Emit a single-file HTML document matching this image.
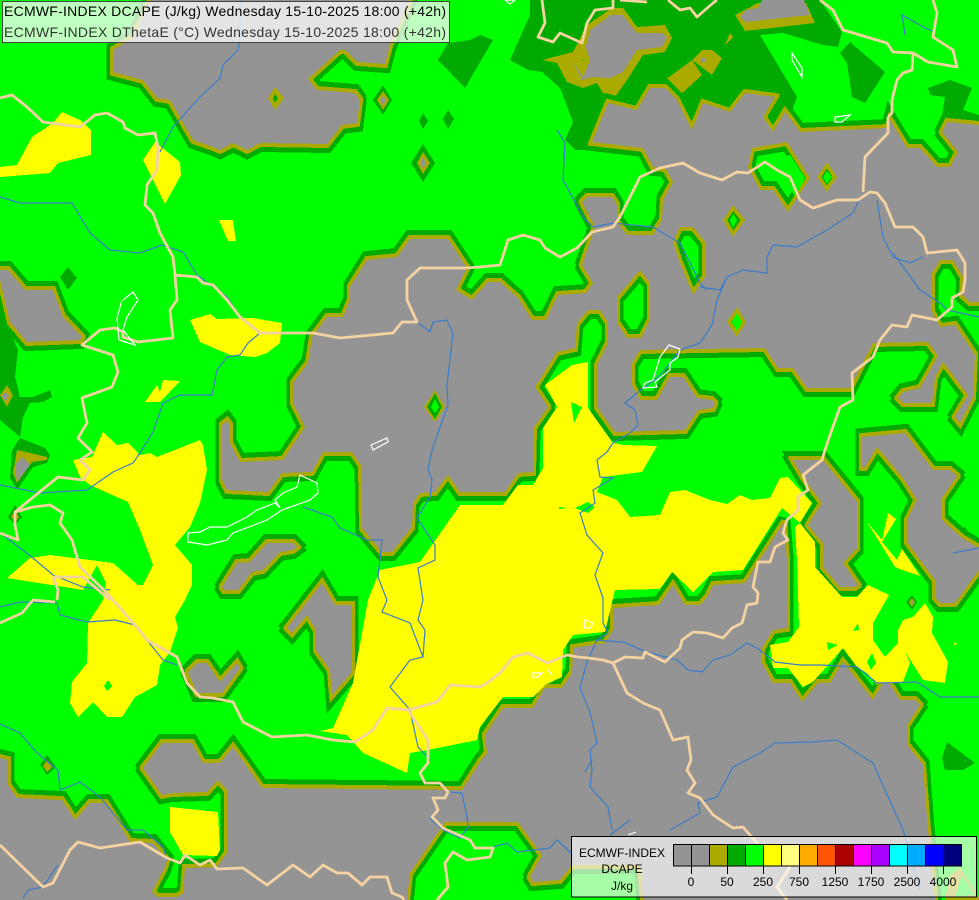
<!DOCTYPE html>
<html><head><meta charset="utf-8"><title>ECMWF-INDEX DCAPE</title>
<style>
html,body{margin:0;padding:0;background:#0f0}
svg{display:block;position:absolute;left:0;top:0}
text{font-family:"Liberation Sans",sans-serif}
.b{fill:none;stroke:#f5d2a2;stroke-width:2.8;stroke-linejoin:round}
.r{fill:none;stroke:#3b7cc8;stroke-width:1.2}
.w{fill:none;stroke:#fff;stroke-width:1.2}
</style></head><body>
<svg width="979" height="900" viewBox="0 0 979 900" xmlns="http://www.w3.org/2000/svg">
<defs>
<path id="g" fill-rule="evenodd" d="
M592,142 643,148 653,167 665,168 673,182 663,200 662,220 653,235 627,235 617,222 617,205 612,197 587,197 582,202 595,227 582,265 593,283 586,293 558,295 546,320 532,320 518,298 500,282 488,282 472,300 456,290 467,268 448,239 410,239 397,257 367,260 350,287 350,300 343,317 327,317 312,337 308,363 293,383 293,403 305,427 283,460 240,462 230,443 230,425 227,421 222,425 222,480 227,490 268,492 282,473 312,472 323,452 352,452 361,465 362,528 382,552 392,552 412,527 413,503 420,493 435,492 448,475 460,492 505,492 518,473 533,472 534,427 548,407 535,387 557,352 575,348 577,323 588,310 600,310 608,322 608,343 597,365 597,407 615,432 685,430 698,410 713,408 715,403 712,400 697,398 683,377 670,377 657,400 640,400 632,385 632,363 640,350 765,348 778,368 793,368 807,388 850,388 873,343 928,342 938,356 920,388 903,392 898,398 903,403 932,403 935,377 943,362 968,395 955,417 960,423 973,397 975,355 955,325 940,327 932,312 932,273 940,260 953,260 963,277 962,295 970,302 979,302 979,125 947,122 942,132 958,152 950,167 937,167 920,148 907,148 890,120 888,128 800,132 785,112 773,132 763,117 775,97 745,93 730,112 703,103 692,130 677,100 665,88 650,88 637,110 608,103Z
M733,205 745,220 733,237 723,220Z
M752,148 787,142 810,178 788,212 773,190 760,190 748,167Z
M827,162 837,177 827,192 817,177Z
M673,242 680,227 693,227 705,242 705,277 693,295 680,263Z
M640,270 650,283 650,320 641,338 627,338 617,323 617,297Z
M737,307 746,322 737,337 727,322Z
M150,0 133,38 113,50 113,72 143,80 157,98 170,100 193,140 213,147 220,150 233,143 247,150 260,143 327,144 342,125 357,123 360,100 355,93 317,90 308,79 340,50 345,50 357,62 385,64 390,45 410,0Z
M0,270 8,270 25,290 53,290 63,317 82,337 80,340 27,342 10,322 0,280Z
M222,587 237,563 250,562 267,543 293,543 297,547 293,550 280,552 263,570 252,572 238,590 224,590Z
M322,583 332,600 335,605 352,605 352,672 332,695 330,670 316,650 316,630 307,615 292,633 287,628Z
M188,672 197,663 207,663 220,682 237,663 240,668 222,693 197,693Z
M862,437 905,433 933,470 950,470 957,476 942,498 942,520 962,538 979,548 979,570 955,603 940,603 935,597 935,580 907,542 907,520 917,500 903,478 877,447 865,467 862,467Z
M793,460 823,460 857,502 857,548 843,563 858,585 855,587 840,587 823,567 823,543 808,525 822,503 803,477Z
M407,900 0,900 0,758 8,760 8,785 17,798 62,800 75,820 90,803 106,803 130,842 153,843 167,860 165,867 152,892 158,897 177,897 183,893 185,868 217,867 227,853 227,790 218,780 207,792 172,793 162,795 143,768 162,743 192,743 203,763 220,763 233,747 262,788 462,790 480,762 487,753 485,735 503,708 533,708 545,688 562,688 572,673 573,648 605,643 613,630 613,608 659,605 673,585 685,605 700,605 707,597 713,585 745,583 784,522 787,560 787,628 773,630 762,648 762,663 773,683 790,683 802,702 818,683 830,683 843,662 873,700 886,678 900,700 915,700 920,705 907,725 907,745 923,765 928,830 935,900 643,900 640,865 572,865 560,880 533,882 530,877 542,855 518,822 445,822 410,873Z"/>
</defs>
<rect width="979" height="900" fill="#00ff00"/>
<g shape-rendering="crispEdges">
<!-- dark green regions -->
<g fill="#00aa00">
<polygon points="530,0 530,15 510,60 528,70 542,72 560,88 573,122 565,140 575,150 610,150 640,125 793,125 793,108 797,97 760,35 783,33 823,45 838,47 842,32 820,0"/>
<polygon points="840,53 850,42 885,72 865,103 852,97 847,63"/>
<polygon points="928,88 950,80 972,88 963,110 979,115 979,125 940,125 942,115 945,97 930,95"/>
<polygon points="448,43 438,60 465,88 493,40 480,35 470,40"/>
<polygon points="0,280 5,320 18,350 15,377 20,397 33,397 50,390 52,397 43,402 30,403 23,417 20,437 0,420"/>
<polygon points="68,267 77,278 68,290 60,277"/>
<polygon points="20,438 45,448 50,455 47,463 33,467 17,490 10,478 12,450"/>
<polygon points="383,85 392,100 383,115 373,100"/>
<polygon points="423,113 428,121 423,129 419,121"/>
<polygon points="448,110 454,119 448,129 443,119"/>
<polygon points="423,144 435,163 423,182 411,163"/>
<polygon points="15,505 22,517 15,525 8,517"/>
<polygon points="47,755 56,767 47,775 40,765"/>
<polygon points="947,742 975,763 963,770 945,770 942,758"/>
<polygon points="960,530 965,527 973,540 979,540 979,548 966,547"/>
</g>
<!-- olive regions -->
<g fill="#aaaa00">
<polygon points="612,8 623,8 637,27 665,25 672,38 665,52 643,55 627,80 613,100 607,100 597,83 583,88 567,82 557,63 542,60 573,52 587,25"/>
<polygon points="665,80 692,60 702,75 678,97"/>
<polygon points="702,50 712,50 722,58 712,75 692,60"/>
<polygon points="725,45 730,33 733,37"/>
<polygon points="735,15 758,3 780,3 806,3 815,23 745,31"/>
<polygon points="7,385 13,395 7,407 0,395"/>
<polygon points="17,450 47,457 47,460 32,462 17,483 13,473"/>
<polygon points="383,91 389,100 383,110 377,100"/>
<polygon points="423,152 430,163 423,174 417,163"/>
<polygon points="15,510 19,517 15,522 11,517"/>
<polygon points="47,760 52,767 47,772 43,766"/>
<polygon points="223,5 235,17 223,30 212,17"/>
</g>
<!-- grey with bands -->
<use href="#g" fill="none" stroke="#00aa00" stroke-width="13" stroke-linejoin="miter" stroke-miterlimit="3" transform="translate(0,-2.5)"/>
<use href="#g" fill="none" stroke="#00aa00" stroke-width="13" stroke-linejoin="miter" stroke-miterlimit="3" transform="translate(0,2.5)"/>
<use href="#g" fill="none" stroke="#aaaa00" stroke-width="6" stroke-linejoin="miter" stroke-miterlimit="3" transform="translate(0,-1)"/>
<use href="#g" fill="none" stroke="#aaaa00" stroke-width="6" stroke-linejoin="miter" stroke-miterlimit="3" transform="translate(0,1)"/>
<use href="#g" fill="#949494"/>
<!-- grey without strokes -->
<g fill="#949494">
<polygon points="611,15 623,15 637,33 662,33 667,38 662,47 637,50 623,72 610,78 593,77 582,80 572,60 587,43 590,30"/>
<polygon points="740,17 746,10 758,8 762,0 804,0 810,15 745,22"/>
<polygon points="0,280 0,270 8,270 0,272"/>
<polygon points="22,457 30,465 17,482 15,465"/>
<polygon points="5,392 9,396 5,402 2,396"/>
<polygon points="383,96 386,100 383,106 380,100"/>
<polygon points="423,157 426,163 423,169 420,163"/>
<polygon points="703,57 707,60 703,63 700,60"/>
</g>
<!-- items over grey -->
<polygon fill="#aaaa00" points="572,60 585,45 590,60 583,77"/>
<polygon fill="#00aa00" points="582,59 583,59 583,61"/>
<polygon fill="#aaaa00" points="275,87 284,98 275,110 268,98"/>
<polygon fill="#00aa00" points="275,94 278,98 275,103 273,98"/>
<polygon fill="#aaaa00" points="435,390 445,407 435,422 424,407"/>
<polygon fill="#00aa00" points="435,393 442,407 435,419 427,407"/>
<polygon fill="#00ff00" points="435,399 439,407 435,413 431,407"/>
<g fill="#00ff00">
<polygon points="777,158 790,155 805,178 795,197 787,182 763,177 763,167"/>
<polygon points="733,214 737,220 733,228 730,220"/>
<polygon points="827,171 832,177 827,184 823,177"/>
<polygon points="737,313 742,322 737,331 732,322"/>
</g>
<polygon fill="#00aa00" points="731,96 733,96 731,100"/>
<!-- yellow -->
<g fill="#ffff00">
<polygon points="0,167 17,165 32,137 53,123 62,112 80,120 91,130 91,155 58,163 50,173 0,177"/>
<polygon points="155,142 180,162 181,175 165,204 143,160"/>
<polygon points="219,220 233,220 236,241 228,241"/>
<polygon points="190,320 210,314 217,319 253,318 282,323 280,343 267,353 255,357 230,355 200,342"/>
<polygon points="145,402 157,385 160,392 163,380 180,381 160,402"/>
<polygon points="73,460 92,457 103,432 117,445 128,443 140,455 150,453 157,457 200,440 203,445 207,470 200,503 190,527 175,545 192,565 192,585 185,600 175,617 178,628 170,652 160,665 157,685 135,697 122,717 107,717 93,702 78,717 70,703 72,682 87,663 88,623 103,600 106,583 97,565 83,590 7,578 30,558 50,555 113,563 138,585 143,585 153,565 140,530 128,502 90,485 80,477"/>
<polygon points="588,362 572,365 545,385 557,407 543,428 543,468 533,485 518,485 503,505 460,505 420,562 380,570 368,600 353,683 333,728 320,731 347,735 363,753 407,773 410,753 428,750 477,740 480,727 503,697 533,697 545,685 562,677 563,650 573,635 605,632 615,590 660,589 672,572 693,592 713,572 743,570 782,508 800,523 812,503 788,477 780,478 770,498 752,500 740,495 727,504 710,500 685,490 670,492 660,515 630,517 617,500 597,492 603,477 642,472 657,446 623,445 613,443 588,408"/>
<polygon points="800,523 815,542 815,567 842,597 857,597 868,585 889,595 873,623 873,640 885,657 898,643 898,630 903,620 913,617 925,603 933,617 932,633 948,662 945,683 923,680 905,652 910,663 903,682 878,683 887,667 877,685 867,673 857,667 843,648 813,682 803,687 788,668 773,668 770,645 788,642 799,627 797,560 795,527"/>
<polygon points="867,522 882,540 888,513 896,519 882,542 897,560 902,549 920,576 902,570 895,567"/>
<polygon points="170,807 218,812 220,850 217,856 183,855 170,832"/>
<polygon points="955,641 957,644 954,645"/>
</g>
<!-- green in yellow -->
<g fill="#00ff00">
<polygon points="827,642 838,645 828,650"/>
<polygon points="872,653 876,663 871,670 867,662"/>
<polygon points="858,623 859,630 853,631"/>
<polygon points="571,402 582,407 574,423"/>
<polygon points="575,508 588,502 595,507 588,513"/>
<polygon points="559,507 568,508 559,509"/>
<polygon points="108,680 112,686 107,691 104,686"/>
</g>
<polygon fill="#00aa00" points="912,595 917,602 912,610 906,602"/>
<polygon fill="#aaaa00" points="912,598 915,602 912,607 909,602"/>
<polygon fill="#949494" points="912,600 913,602 912,604 911,602"/>
<!-- bottom right patch -->
<polygon fill="#aaaa00" points="960,868 979,897 979,900 945,900 950,875"/>
<polygon fill="#00ff00" points="962,875 975,895 955,897"/>
</g>
<!-- rivers -->
<g class="r">
<polyline points="240,0 240,40 238,50 223,65 220,78 197,100 173,127 160,152"/>
<polyline points="0,197 20,203 72,203 90,233 110,250 140,253 162,245 183,252 197,275 227,297 240,317 260,333 248,343 240,355 227,357 217,370 212,395 180,395 163,403 153,432 140,453 133,463 113,472 87,490 40,493 0,485"/>
<polyline points="0,533 20,548 33,558 53,575 83,587 110,590"/>
<polyline points="0,724 20,733 37,753 58,770 60,790 80,782 100,797 113,813 127,830 143,830 163,847 167,860"/>
<polyline points="0,607 20,602 57,603 60,615 87,622 115,620 135,625 147,640 163,660 177,665"/>
<polyline points="23,898 28,890 43,887 58,865"/>
<polyline points="303,507 332,517 340,528 367,540 382,540 378,577 387,600 382,612 410,623 423,657 410,660 390,687 410,710 418,747 430,760"/>
<polyline points="417,322 430,332 433,322 447,320 453,333 447,385 448,405 432,450 428,470 432,480 430,497 417,518 435,545 435,560 418,568 423,600 418,620 425,630 423,657"/>
<polyline points="717,300 712,325 700,343 680,350 667,367 657,378 637,393 625,403 635,410 638,425 630,433 613,443 607,452 597,460 600,477 613,478 593,490 595,503 580,513 587,535 603,553 595,575 603,598 603,623 608,633 597,640 587,662 580,688 590,712 597,743 590,750 592,770 590,787 608,807 612,830"/>
<polyline points="700,287 720,290 727,277 743,270 767,273 767,257 773,245 797,247 827,230 853,213 860,198"/>
<polyline points="717,300 727,277"/>
<polyline points="877,200 883,237 893,257 910,263 923,257"/>
<polyline points="893,253 920,290 940,303 947,310 979,317"/>
<polyline points="557,130 565,143 563,180 583,217 593,227 613,223 653,227 680,243 700,283 707,290"/>
<polyline points="595,640 623,642 647,652 677,660 688,670 702,672 713,660 730,655 747,643 760,650 775,662 800,665 820,665 857,667 877,683 917,682 940,697 979,697"/>
<polyline points="670,830 700,813 698,803 717,797 733,767 760,753 775,743 813,742 837,740 873,763 903,830 920,890"/>
<polyline points="630,820 610,835"/>
<polyline points="493,847 507,843 517,852 550,848 557,840 573,855"/>
<polyline points="450,792 462,793 467,817 468,827 460,838 443,830 430,818"/>
<polyline points="585,772 592,760"/>
<polyline points="953,553 979,548"/>
<polyline points="905,35 902,15 925,28 935,32"/>
</g>
<!-- borders -->
<g class="b">
<polyline points="0,98 12,95 27,107 43,122 80,127 95,115 107,113 123,122 125,128 138,135 155,133 158,147 157,170 147,185 145,205 153,213 160,233 173,257 175,275 197,277 203,283 213,285 227,300 240,317 260,333 313,333 340,338 393,333 402,322 417,322 407,300 407,280 420,268 465,268 480,267 500,265 508,240 523,235 540,240 545,248 560,257 577,248 592,232 613,227 620,217 640,177 660,168 683,163 700,173 722,180 737,172 748,173 765,162 777,170 790,177 800,200 813,208 837,200 858,200 870,192 877,193 885,203 895,227 913,227 923,237 927,253 957,250 965,263 965,280 963,292 952,298 952,307 937,320 912,315 907,327 892,325 880,340 873,357 852,373 853,400 840,407 830,435 825,450 822,460 803,475 808,490 798,497 798,510 787,520 783,533 788,540 775,547 770,562 758,562 753,587 758,593 757,603 747,605 742,623 732,628 723,638 707,633 693,632 682,640 680,648 665,662 645,652 643,658 625,657 613,663 603,660 588,658 578,657 567,655 547,663 528,653 513,657 500,673 487,683 480,687 450,685 437,702 408,710 387,708 373,730 355,742 333,740 307,735 272,737 243,722 233,702 213,698 200,697 187,683 177,657 147,640 135,625 113,600 107,593 80,567 72,540 60,523 63,513 50,505 33,507 15,512 42,490 58,477 83,480 90,470 80,460 92,452 78,438 87,423 82,398 112,387 118,372 113,355 82,345 100,330 115,328 123,332 123,337 138,342 173,338 170,310 177,300 175,275"/>
<polyline points="888,117 888,133 865,157 863,192"/>
<polyline points="888,117 892,113 892,100 897,80 903,73 912,70 913,53 893,52 887,43 843,30 833,10 820,0"/>
<polyline points="913,53 928,62 957,67 953,50 933,37 937,13 933,0"/>
<polyline points="15,512 15,525 18,540 0,533"/>
<polyline points="53,577 83,577 110,600"/>
<polyline points="53,577 58,590 57,600"/>
<polyline points="0,623 22,613 33,600 55,602"/>
<polyline points="0,845 43,887 53,883 70,850 78,842 100,848 140,842 167,858 180,863 185,855 200,865 210,860 217,869 243,868 267,885 293,865 310,877 323,865 337,873 348,873 362,885 370,877 387,877 392,893 402,897 404,900"/>
<polyline points="408,710 428,740 428,763 420,773 425,783 440,783 448,792 445,798 433,798 438,810 432,817 443,828 470,840 475,848 493,848 490,857 467,860 453,852 445,863 448,887 437,900"/>
<polyline points="613,663 627,693 643,703 660,710 673,740 688,737 691,760 687,770 695,783 688,793 700,798 713,815 733,828 743,827 757,843 790,867 777,887 787,900"/>
<polyline points="542,0 545,23 538,37 553,42 560,33 582,43 587,23 595,10 613,8 613,0"/>
<polyline points="668,0 680,10 690,8 697,17 713,3 717,0"/>
<polyline points="620,0 647,2"/>
</g>
<!-- lakes -->
<g class="w">
<polygon points="188,533 200,532 210,527 227,527 247,517 257,510 275,503 280,508 275,500 283,493 297,487 300,475 317,483 318,493 310,500 282,510 267,520 233,533 227,540 207,545 188,542"/>
<polygon points="371,445 387,438 388,442 373,450"/>
<polyline points="122,300 117,318 119,340 135,345 123,330 127,317 138,300 133,292 123,300"/>
<polygon points="669,345 680,349 678,357 670,363 670,370 655,382 657,387 643,388 645,383 653,380 660,357"/>
<polygon points="792,53 802,68 802,77 792,60"/>
<polygon points="835,117 850,115 842,122 835,122"/>
<polygon points="585,620 593,623 590,628 584,628"/>
<polygon points="533,673 542,673 538,677 533,677"/>
<polyline points="548,670 552,675"/>
<polygon points="505,0 515,0 510,4"/>
<polyline points="628,835 636,832"/>
</g>
<!-- title box -->
<rect x="2.5" y="1.5" width="447" height="41" fill="#ffffff" fill-opacity="0.75" stroke="#444" stroke-width="1"/>
<text x="4" y="16" font-size="14" fill="#000" textLength="442" lengthAdjust="spacing">ECMWF-INDEX DCAPE (J/kg) Wednesday 15-10-2025 18:00 (+42h)</text>
<text x="4" y="37" font-size="14" fill="#333" textLength="442" lengthAdjust="spacing">ECMWF-INDEX DThetaE (°C) Wednesday 15-10-2025 18:00 (+42h)</text>
<!-- legend -->
<rect x="571.5" y="836.5" width="405" height="60.5" fill="#ffffff" fill-opacity="0.65" stroke="#000" stroke-width="1"/>
<g stroke="#000" stroke-width="1" shape-rendering="crispEdges">
<rect x="673.5" y="844.5" width="18" height="21.5" fill="#949494"/>
<rect x="691.5" y="844.5" width="18" height="21.5" fill="#949494"/>
<rect x="709.5" y="844.5" width="18" height="21.5" fill="#aaaa00"/>
<rect x="727.5" y="844.5" width="18" height="21.5" fill="#00aa00"/>
<rect x="745.5" y="844.5" width="18" height="21.5" fill="#00ff00"/>
<rect x="763.5" y="844.5" width="18" height="21.5" fill="#ffff00"/>
<rect x="781.5" y="844.5" width="18" height="21.5" fill="#ffff80"/>
<rect x="799.5" y="844.5" width="18" height="21.5" fill="#ffaa00"/>
<rect x="817.5" y="844.5" width="18" height="21.5" fill="#ff5500"/>
<rect x="835.5" y="844.5" width="18" height="21.5" fill="#aa0000"/>
<rect x="853.5" y="844.5" width="18" height="21.5" fill="#ff00ff"/>
<rect x="871.5" y="844.5" width="18" height="21.5" fill="#aa00ff"/>
<rect x="889.5" y="844.5" width="18" height="21.5" fill="#00ffff"/>
<rect x="907.5" y="844.5" width="18" height="21.5" fill="#00aaff"/>
<rect x="925.5" y="844.5" width="18" height="21.5" fill="#0000ff"/>
<rect x="943.5" y="844.5" width="18" height="21.5" fill="#00007f"/>
<path fill="none" d="M691.5,866V874M727.5,866V874M763.5,866V874M799.5,866V874M835.5,866V874M871.5,866V874M907.5,866V874M943.5,866V874"/>
</g>
<g font-size="12" fill="#000" text-anchor="middle">
<text x="622" y="857">ECMWF-INDEX</text>
<text x="622" y="873">DCAPE</text>
<text x="622" y="890">J/kg</text>
<text x="691" y="886">0</text>
<text x="727" y="886">50</text>
<text x="763" y="886">250</text>
<text x="799" y="886">750</text>
<text x="835" y="886">1250</text>
<text x="871" y="886">1750</text>
<text x="907" y="886">2500</text>
<text x="943" y="886">4000</text>
</g>
</svg>
</body></html>
